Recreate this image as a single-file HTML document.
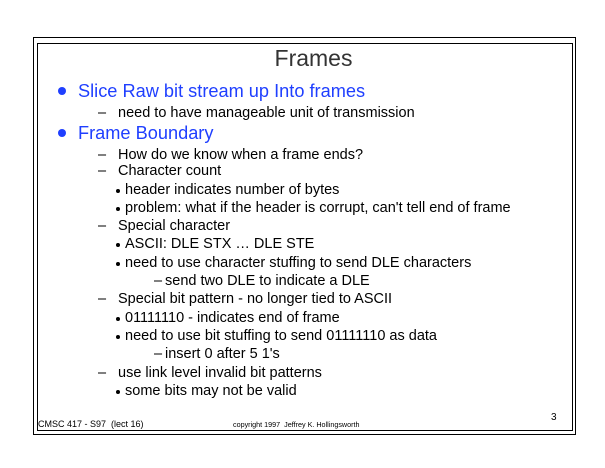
<!DOCTYPE html>
<html><head><meta charset="utf-8"><style>
html,body{margin:0;padding:0;background:#fff;}
body{width:605px;height:468px;position:relative;overflow:hidden;font-family:"Liberation Sans",Arial,sans-serif;color:#000;}
.b{position:absolute;border:1px solid #000;}
.t{position:absolute;white-space:nowrap;line-height:1;}
.blue{color:#1f3fff;font-size:18.2px;}
.s{font-size:14.5px;}
.dot{position:absolute;width:8px;height:8px;border-radius:50%;background:#1f3fff;}
.sb{position:absolute;width:4px;height:4px;border-radius:50%;background:#000;}
</style></head><body>
<div class="b" style="left:33px;top:37px;width:541px;height:396px;border-width:1.5px"></div>
<div class="b" style="left:37px;top:43px;width:534px;height:386px"></div>
<div class="t" style="left:0;width:627px;text-align:center;top:47px;font-size:23px;color:#333">Frames</div>

<div class="dot" style="left:58px;top:87px"></div>
<div class="t blue" style="left:78px;top:82px">Slice Raw bit stream up Into frames</div>
<div class="t" style="left:98px;top:106px;font-size:14.5px">–</div><div class="t s" style="left:118px;top:106px">need to have manageable unit of transmission</div>
<div class="dot" style="left:58px;top:129px"></div>
<div class="t blue" style="left:78px;top:124px">Frame Boundary</div>

<div class="t s" style="left:98px;top:148px">–</div><div class="t s" style="left:118px;top:148px">How do we know when a frame ends?</div>
<div class="t s" style="left:98px;top:164px">–</div><div class="t s" style="left:118px;top:164px">Character count</div>
<div class="sb" style="left:116px;top:189px"></div><div class="t s" style="left:125px;top:183px">header indicates number of bytes</div>
<div class="sb" style="left:116px;top:207px"></div><div class="t s" style="left:125px;top:201px">problem: what if the header is corrupt, can't tell end of frame</div>
<div class="t s" style="left:98px;top:219px">–</div><div class="t s" style="left:118px;top:219px">Special character</div>
<div class="sb" style="left:116px;top:243px"></div><div class="t s" style="left:125px;top:237px">ASCII: DLE STX … DLE STE</div>
<div class="sb" style="left:116px;top:262px"></div><div class="t s" style="left:125px;top:256px">need to use character stuffing to send DLE characters</div>
<div class="t s" style="left:154px;top:274px">–</div><div class="t s" style="left:165px;top:274px">send two DLE to indicate a DLE</div>
<div class="t s" style="left:98px;top:292px">–</div><div class="t s" style="left:118px;top:292px">Special bit pattern - no longer tied to ASCII</div>
<div class="sb" style="left:116px;top:317px"></div><div class="t s" style="left:125px;top:311px">01111110 - indicates end of frame</div>
<div class="sb" style="left:116px;top:335px"></div><div class="t s" style="left:125px;top:329px">need to use bit stuffing to send 01111110 as data</div>
<div class="t s" style="left:154px;top:347px">–</div><div class="t s" style="left:165px;top:347px">insert 0 after 5 1's</div>
<div class="t s" style="left:98px;top:366px">–</div><div class="t s" style="left:118px;top:366px">use link level invalid bit patterns</div>
<div class="sb" style="left:116px;top:390px"></div><div class="t s" style="left:125px;top:384px">some bits may not be valid</div>

<div class="t" style="left:38px;top:420px;font-size:9px">CMSC 417 - S97&nbsp; (lect 16)</div>
<div class="t" style="left:233px;top:421px;font-size:7.2px">copyright 1997&nbsp; Jeffrey K. Hollingsworth</div>
<div class="t" style="left:551px;top:413px;font-size:10px">3</div>
</body></html>
